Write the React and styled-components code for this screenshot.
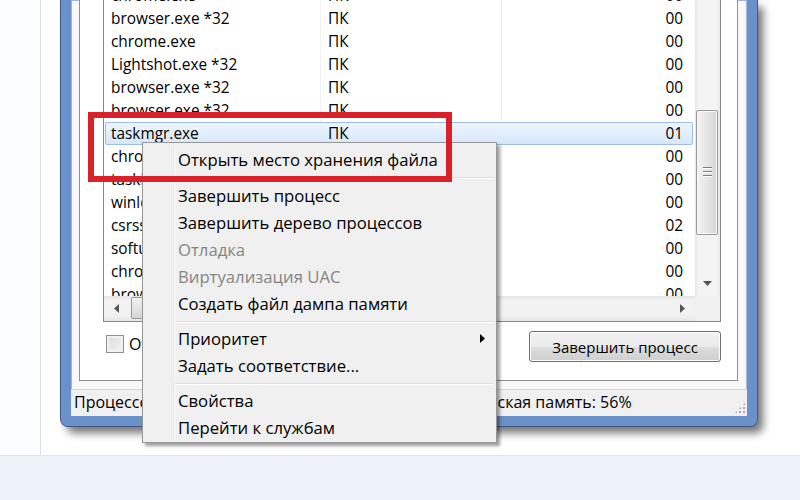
import React from 'react'
import styled, { createGlobalStyle } from 'styled-components'

const GlobalStyle = createGlobalStyle`
  html, body { margin: 0; padding: 0; }
  body { font-family: "Open Sans", "Noto Sans", sans-serif; color: #000; }
`

// Page
const Page = styled.div`
  position: relative;
  width: 800px;
  height: 500px;
  overflow: hidden;
  background: #fff;
`

const Main = styled.div`
  display: flex;
  height: 455px;
`

const Gutter = styled.div`
  width: 40px;
  border-right: 1px solid #d9e0ea;
  background: #fcfdfe;
`

const Content = styled.div`
  flex: 1;
  padding-left: 20px;
`

const Footer = styled.div`
  height: 44px;
  border-top: 1px solid #dfe5ee;
  background: #eef2f9;
`

// Window
const Window = styled.div`
  width: 676px;
  height: 416px;
  border: 10px solid #6b91cb;
  border-top: 0;
  border-radius: 0 0 7px 7px;
  background: #f8f8f8;
  display: flex;
  flex-direction: column;
  box-shadow: 0 0 0 1px #3f5a82, inset 0 0 0 1px #9fb8dd, 6px 7px 9px rgba(0,0,0,0.55);
`

const TabPage = styled.div`
  flex: 1;
  margin: 0 9px 8px 8px;
  border: 1px solid #8e8f8f;
  border-top: 0;
  background: #fff;
  display: flex;
  flex-direction: column;
  padding: 0 16px 17px 23px;
`

const ListView = styled.div`
  height: 321px;
  border: 1px solid #828790;
  border-top: 0;
  display: grid;
  grid-template-columns: 1fr 25px;
  grid-template-rows: 1fr 25px;
`

const Rows = styled.div`
  overflow: hidden;
  font-size: 15.4px;
  background:
    linear-gradient(#f0f0f0, #f0f0f0) 216px 0 / 1px 100% no-repeat,
    linear-gradient(#f0f0f0, #f0f0f0) 397px 0 / 1px 100% no-repeat,
    #fff;
`

const RowList = styled.div`
  margin-top: -16px;
`

const Row = styled.div`
  display: grid;
  grid-template-columns: 216px 181px 1fr;
  height: 23px;
  align-items: center;
  margin-right: 2px;
  margin-left: 1px;
  border-radius: 2px;
  box-sizing: border-box;
  border: 1px solid ${p => (p.$selected ? '#9dbee6' : 'transparent')};
  background: ${p => (p.$selected ? 'linear-gradient(#eef5fe, #d6e7fb)' : 'transparent')};
`

const Cell = styled.div`
  white-space: nowrap;
  overflow: hidden;
  padding: 0 ${p => (p.$right ? '9px' : '0')} 0 ${p => p.$pad || '5px'};
  text-align: ${p => (p.$right ? 'right' : 'left')};
`

const VScroll = styled.div`
  display: flex;
  flex-direction: column;
  background: linear-gradient(90deg, #e6e6e6, #f4f4f4 15%, #f4f4f4 85%, #e9e9e9);
`

const VThumb = styled.div`
  margin: 110px 2px 0 1px;
  height: 123px;
  border: 1px solid #9a9a9a;
  border-radius: 2px;
  background: linear-gradient(90deg, #f3f3f3, #e6e6e6 50%, #d6d6d6);
  box-shadow: inset 0 0 0 1px #f9f9f9;
  display: flex;
  align-items: center;
  justify-content: center;
`

const Grip = styled.div`
  width: 9px;
  height: 11px;
  background: repeating-linear-gradient(#7d7d7d 0 1px, #fff 1px 2px, transparent 2px 4px);
`

const Spacer = styled.div`
  flex: 1;
`

const ArrowButton = styled.div`
  width: 25px;
  height: 25px;
  display: flex;
  align-items: center;
  justify-content: center;
  flex-shrink: 0;
`

const HScroll = styled.div`
  display: flex;
  background: linear-gradient(#e4e4e4, #f3f3f3 20%, #f1f1f1 80%, #e6e6e6);
`

const HThumb = styled.div`
  margin: 1px 0 2px 2px;
  width: 200px;
  border: 1px solid #9a9a9a;
  border-radius: 2px;
  background: linear-gradient(#f3f3f3, #e4e4e4 50%, #d6d6d6);
`

const Corner = styled.div`
  background: #f0f0f0;
`

const BottomRow = styled.div`
  display: flex;
  justify-content: space-between;
  align-items: flex-start;
  padding-top: 9px;
  flex: 1;
`

const CheckLabel = styled.label`
  display: flex;
  align-items: center;
  gap: 5px;
  margin: 2px 0 0 3px;
  font-size: 16px;
  white-space: nowrap;
`

const CheckBox = styled.span`
  width: 16px;
  height: 16px;
  border: 1px solid #8f8f8f;
  background: linear-gradient(135deg, #d9d9d9, #f7f7f7);
  box-shadow: inset 0 0 0 2px #f2f2f2;
`

const Button = styled.button`
  width: 192px;
  height: 31px;
  border: 1px solid #707070;
  border-radius: 3px;
  background: linear-gradient(#f2f2f2 0%, #ebebeb 50%, #dddddd 51%, #cfcfcf 100%);
  box-shadow: inset 0 0 0 1px #fcfcfc;
  font-family: inherit;
  font-size: 15px;
  color: #000;
  padding: 0;
`

const StatusBar = styled.div`
  height: 26px;
  border-top: 1px solid #d6d6d6;
  background: #f0f0f0;
  display: flex;
  align-items: center;
  font-size: 16px;
`

const StatusPanel = styled.div`
  width: ${p => p.$w || 'auto'};
  flex: ${p => (p.$w ? 'none' : 1)};
  padding: 0 0 2px 3px;
  white-space: nowrap;
`

const ResizeGrip = styled.div`
  width: 12px;
  height: 12px;
  align-self: flex-end;
  margin: 0 1px 2px 0;
  background:
    radial-gradient(circle, #a8a8a8 1px, transparent 1.3px) 0 0 / 4px 4px;
  clip-path: polygon(100% 0, 100% 100%, 0 100%);
`

// Context menu
const Menu = styled.div`
  position: absolute;
  left: 142px;
  top: 142px;
  width: 349px;
  padding: 3px 2px 1px 2px;
  background: #f0f0f0;
  border: 1px solid #979797;
  box-shadow: 3px 3px 3px rgba(0,0,0,0.38);
  font-size: 16.7px;
`

const MenuGutter = styled.div`
  position: absolute;
  left: 30px;
  top: 3px;
  bottom: 1px;
  width: 1px;
  background: #e2e3e3;
  box-shadow: 1px 0 0 #fff;
`

const MenuItem = styled.div`
  position: relative;
  height: 27px;
  display: flex;
  align-items: center;
  padding-left: 33px;
  color: ${p => (p.$disabled ? '#858585' : '#000')};
`

const Submenu = styled.svg`
  position: absolute;
  right: 9px;
  top: 9px;
`

const Separator = styled.div`
  height: ${p => p.$h || 8}px;
  display: flex;
  align-items: center;
  margin-left: 30px;
  &::after {
    content: '';
    flex: 1;
    height: 1px;
    background: #e0e0e0;
    box-shadow: 0 1px 0 #fff;
  }
`

const Highlight = styled.div`
  position: absolute;
  left: 88px;
  top: 112px;
  width: 364px;
  height: 70px;
  box-sizing: border-box;
  border: 6px solid #da2129;
`

const rows = [
  ['chrome.exe', 'ПК', '00'],
  ['browser.exe *32', 'ПК', '00'],
  ['chrome.exe', 'ПК', '00'],
  ['Lightshot.exe *32', 'ПК', '00'],
  ['browser.exe *32', 'ПК', '00'],
  ['browser.exe *32', 'ПК', '00'],
  ['taskmgr.exe', 'ПК', '01', true],
  ['chrome.exe', 'ПК', '00'],
  ['taskhost.exe', 'ПК', '00'],
  ['winlogon.exe', 'СИСТЕМА', '00'],
  ['csrss.exe', 'СИСТЕМА', '02'],
  ['softupnotify.exe', 'ПК', '00'],
  ['chrome.exe', 'ПК', '00'],
  ['browser.exe *32', 'ПК', '00'],
]

const menu = [
  { label: 'Открыть место хранения файла' },
  { sep: 9 },
  { label: 'Завершить процесс' },
  { label: 'Завершить дерево процессов' },
  { label: 'Отладка', disabled: true },
  { label: 'Виртуализация UAC', disabled: true },
  { label: 'Создать файл дампа памяти' },
  { sep: 8 },
  { label: 'Приоритет', sub: true },
  { label: 'Задать соответствие...' },
  { sep: 8 },
  { label: 'Свойства' },
  { label: 'Перейти к службам' },
]

const Tri = ({ dir }) => {
  const pts = {
    left: '5,0 0,4.5 5,9',
    right: '0,0 5,4.5 0,9',
    down: '0,0 9,0 4.5,5',
  }[dir]
  const w = dir === 'down' ? 9 : 5
  const h = dir === 'down' ? 5 : 9
  return (
    <svg width={w} height={h} viewBox={`0 0 ${w} ${h}`}>
      <polygon points={pts} fill="#555" />
    </svg>
  )
}

export default function App() {
  return (
    <Page>
      <GlobalStyle />
      <Main>
        <Gutter />
        <Content>
          <Window>
            <TabPage>
              <ListView>
                <Rows>
                  <RowList>
                    {rows.map(([name, user, cpu, sel], i) => (
                      <Row key={i} $selected={sel}>
                        <Cell>{name}</Cell>
                        <Cell $pad="6px">{user}</Cell>
                        <Cell $right>{cpu}</Cell>
                      </Row>
                    ))}
                  </RowList>
                </Rows>
                <VScroll>
                  <VThumb><Grip /></VThumb>
                  <Spacer />
                  <ArrowButton><Tri dir="down" /></ArrowButton>
                </VScroll>
                <HScroll>
                  <ArrowButton><Tri dir="left" /></ArrowButton>
                  <HThumb />
                  <Spacer />
                  <ArrowButton><Tri dir="right" /></ArrowButton>
                </HScroll>
                <Corner />
              </ListView>
              <BottomRow>
                <CheckLabel><CheckBox />Отображать процессы всех пользователей</CheckLabel>
                <Button>Завершить процесс</Button>
              </BottomRow>
            </TabPage>
            <StatusBar>
              <StatusPanel $w="170px">Процессов: 74</StatusPanel>
              <StatusPanel $w="188px">Загрузка ЦП: 3%</StatusPanel>
              <StatusPanel>Физическая память: 56%</StatusPanel>
              <ResizeGrip />
            </StatusBar>
          </Window>
        </Content>
      </Main>
      <Footer />
      <Menu>
        <MenuGutter />
        {menu.map((m, i) =>
          m.sep ? (
            <Separator key={i} $h={m.sep} />
          ) : (
            <MenuItem key={i} $disabled={m.disabled}>
              {m.label}
              {m.sub && (
                <Submenu width="5" height="9" viewBox="0 0 5 9">
                  <polygon points="0,0 5,4.5 0,9" fill="#000" />
                </Submenu>
              )}
            </MenuItem>
          )
        )}
      </Menu>
      <Highlight />
    </Page>
  )
}
